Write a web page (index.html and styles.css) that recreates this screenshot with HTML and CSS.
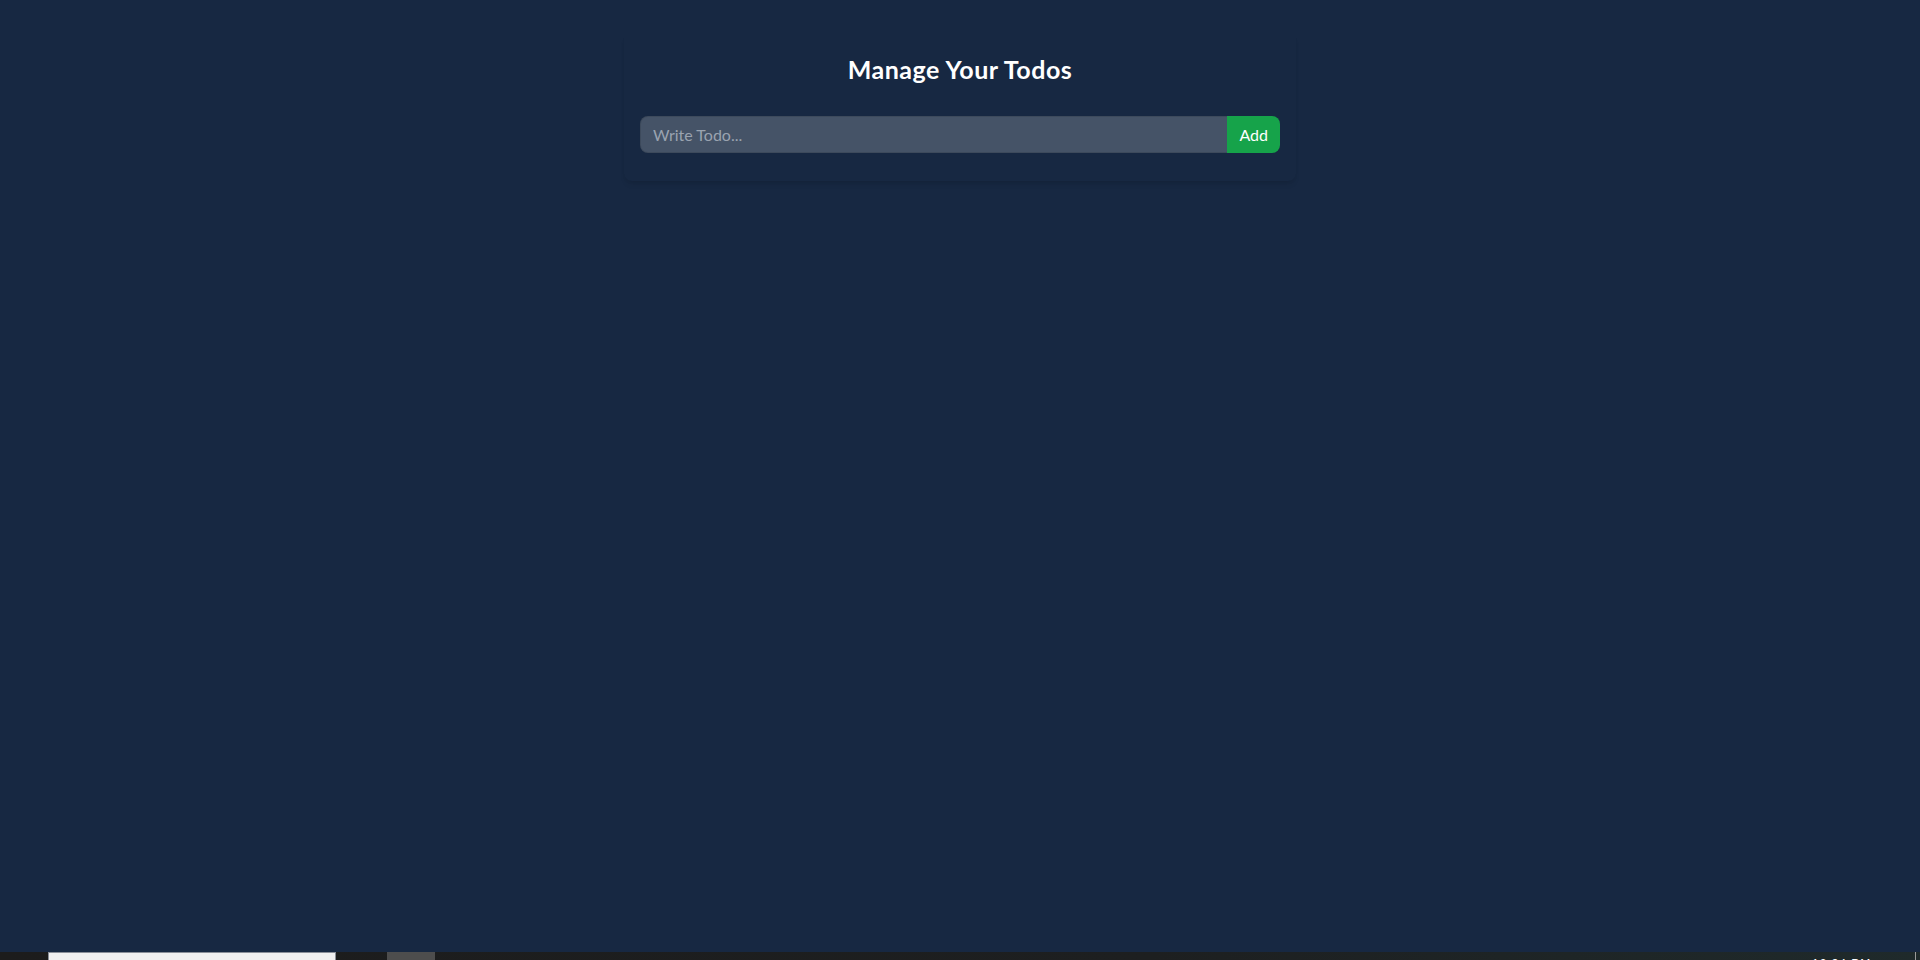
FILE: index.html
```html
<!DOCTYPE html>
<html lang="en">
<head>
<meta charset="utf-8">
<title>Todo</title>
<link rel="stylesheet" href="styles.css">
</head>
<body>
<div class="screen">
  <main class="app">
    <div class="card">
      <h1 class="title">Manage Your Todos</h1>
      <form class="todo-form">
        <input class="todo-input" type="text" placeholder="Write Todo...">
        <button class="add-btn" type="button">Add</button>
      </form>
      <div class="todo-list"></div>
    </div>
  </main>
  <footer class="taskbar">
    <div class="tb-search"></div>
    <div class="tb-app"></div>
    <div class="tb-spacer"></div>
    <div class="tb-clock">12:34 PM</div>
    <div class="tb-edge"></div>
  </footer>
</div>
</body>
</html>
```
FILE: styles.css
```css
* { box-sizing: border-box; }
html, body { margin: 0; padding: 0; }
body {
  font-family: "Lato", "Noto Sans", sans-serif;
  background: #172842;
}
.screen {
  height: 960px;
  display: flex;
  flex-direction: column;
  overflow: hidden;
}
.app {
  flex: 1;
  background: #172842;
  padding-top: 32px;
}
.card {
  width: 672px;
  margin: 0 auto;
  padding: 12px 16px;
  border-radius: 8px;
  color: #fff;
  box-shadow: 0 5px 6px -2px rgba(0,0,0,0.09), 0 2px 4px -2px rgba(0,0,0,0.08);
}
.title {
  margin: 9px 0 31px;
  font-size: 25px;
  line-height: 32px;
  font-weight: 700;
  letter-spacing: 0.5px;
  text-align: center;
}
.todo-form {
  display: flex;
  margin: 0 0 16px;
}
.todo-input {
  flex: 1;
  min-width: 0;
  height: 37px;
  border: 1px solid rgba(0,0,0,0.1);
  border-right: none;
  border-radius: 8px 0 0 8px;
  padding: 6px 12px;
  background: #455367;
  color: #fff;
  font-family: inherit;
  font-size: 16px;
  outline: none;
}
.todo-input::placeholder { color: #9aa3b0; }
.add-btn {
  flex-shrink: 0;
  height: 37px;
  border: none;
  border-radius: 0 8px 8px 0;
  padding: 4px 12px;
  background: #16a34a;
  color: #fff;
  font-family: inherit;
  font-size: 16px;
}
.todo-list { display: flex; flex-wrap: wrap; row-gap: 12px; }
.taskbar {
  height: 8px;
  flex-shrink: 0;
  display: flex;
  background: linear-gradient(90deg, #1c1c1c 0%, #1d1f20 60%, #1f2a2b 100%);
  overflow: hidden;
}
.tb-search {
  margin-left: 48px;
  width: 288px;
  background: #f0f0f0;
  border-top: 1px solid #8a8f98;
  border-left: 1px solid #8a8f98;
  border-right: 1px solid #8a8f98;
}
.tb-app {
  margin-left: 51px;
  width: 48px;
  background: #4d4d4d;
}
.tb-spacer { flex: 1; }
.tb-clock {
  width: 103px;
  padding-top: 5px;
  color: #fff;
  font-family: "Liberation Sans", sans-serif;
  font-size: 12px;
  line-height: 14px;
  letter-spacing: 1px;
}
.tb-edge {
  width: 1px;
  margin-right: 4px;
  background: #9a9a9a;
}
```
